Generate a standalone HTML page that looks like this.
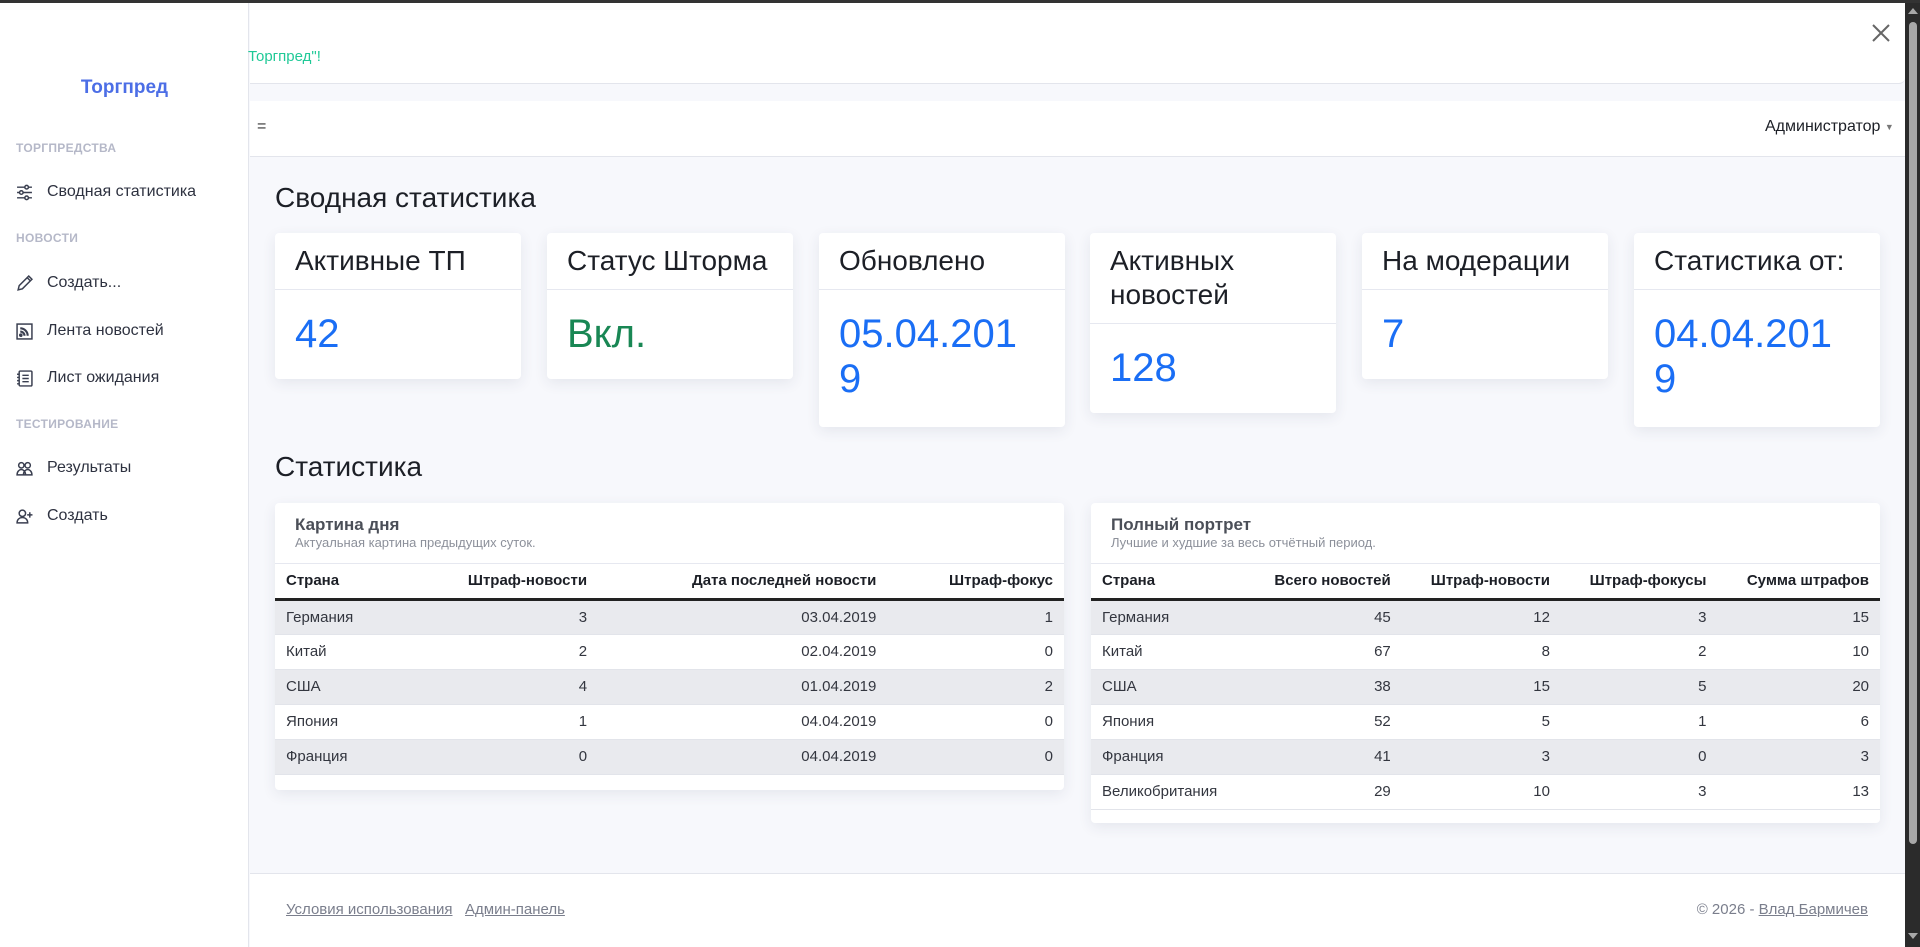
<!DOCTYPE html>
<html><head><meta charset="utf-8"><style>
*{box-sizing:border-box;margin:0;padding:0}
body{width:1920px;height:947px;overflow:hidden;background:#f7f8fc;font-family:"Liberation Sans",sans-serif;color:#212529;position:relative}
.a{position:absolute}
.side{left:0;top:3px;width:249px;height:944px;background:#fff;border-right:1px solid #e3e5ec}
.lbl{left:16px;font-size:12px;font-weight:bold;color:#b5b8c8;letter-spacing:.3px}
.it{left:16px;font-size:16px;color:#2e3240;display:flex;align-items:center;gap:14px;height:20px}
.it svg{width:17px;height:17px;stroke:#3a3f50;fill:none;stroke-width:1.4}
.card{background:#fff;border-radius:4px;box-shadow:0 4px 14px rgba(40,50,90,.09)}
.card .h{font-size:28px;padding:0 20px;border-bottom:1px solid #e6e8f0;color:#1c1f26;line-height:34px}
.card .v{font-size:40px;color:#1a6ef5;padding:0 20px;line-height:45px}
table{border-collapse:collapse;width:100%;font-size:15px}
th{font-weight:bold;text-align:right;height:35px;padding:0 11px;border-bottom:3px solid #222;color:#1c1f26}
td{text-align:right;height:35px;padding:0 11px;color:#33363f;border-top:1px solid #e2e4ea}
th:first-child,td:first-child{text-align:left}
tbody tr:nth-child(odd){background:#e9eaee}
.tt{font-size:17px;font-weight:bold;color:#4b4f58}
.ts{font-size:13px;color:#8c909a}
</style></head><body>
<div class="a" style="left:0;top:0;width:1920px;height:3px;background:#333"></div>
<div class="a side">
<div class="a" style="left:0;width:249px;top:74px;text-align:center;font-size:19px;font-weight:bold;color:#4c6ee6">Торгпред</div>
<div class="a lbl" style="top:138px">ТОРГПРЕДСТВА</div>
<div class="a it" style="top:179px"><svg viewBox="0 0 16 16"><path d="M1 3h14M1 8h14M1 13h14"/><circle cx="10" cy="3" r="1.7" fill="#fff"/><circle cx="5" cy="8" r="1.7" fill="#fff"/><circle cx="10" cy="13" r="1.7" fill="#fff"/></svg>Сводная статистика</div>
<div class="a lbl" style="top:228px">НОВОСТИ</div>
<div class="a it" style="top:270px"><svg viewBox="0 0 16 16"><path d="M2 14l1-4L12 1l3 3-9 9z M10.5 2.5l3 3"/></svg>Создать...</div>
<div class="a it" style="top:318px"><svg viewBox="0 0 16 16"><rect x="1" y="1" width="14" height="14"/><path d="M4 5a7 7 0 017 7M4 8a4 4 0 014 4" stroke-width="2"/><circle cx="4.5" cy="11.5" r="1" fill="#3a3f50"/></svg>Лента новостей</div>
<div class="a it" style="top:365px"><svg viewBox="0 0 16 16"><rect x="3" y="1" width="12" height="14" rx="1"/><path d="M6 5h6M6 8h6M6 11h6M1 4h2M1 7h2M1 10h2M1 13h2"/></svg>Лист ожидания</div>
<div class="a lbl" style="top:414px">ТЕСТИРОВАНИЕ</div>
<div class="a it" style="top:455px"><svg viewBox="0 0 16 16"><circle cx="5" cy="5" r="2.5"/><circle cx="11" cy="5" r="2.5"/><path d="M1 14c0-3 2-5 4-5s4 2 4 5zM7 14c0-3 2-5 4-5s4 2 4 5z"/></svg>Результаты</div>
<div class="a it" style="top:503px"><svg viewBox="0 0 16 16"><circle cx="6" cy="5" r="3"/><path d="M1 14c0-3 2-5 5-5s5 2 5 5zM13 4v5M10.5 6.5h5"/></svg>Создать</div>
</div>
<div class="a" style="left:250px;top:3px;width:1655px;height:81px;background:#fff;border-bottom:1px solid #e3e5ec;border-radius:0 0 6px 0"></div>
<div class="a" style="left:248px;top:48px;font-size:15px;color:#20c997">Торгпред"!</div>
<div class="a" style="left:1870px;top:22px;width:22px;height:22px"><svg width="22" height="22" viewBox="0 0 22 22"><path d="M3 3l16 16M19 3L3 19" stroke="#666" stroke-width="2"/></svg></div>
<div class="a" style="left:250px;top:101px;width:1655px;height:56px;background:#fff;border-bottom:1px solid #e3e5ec"></div>
<div class="a" style="left:257px;top:118px;font-size:16px;color:#333">=</div>
<div class="a" style="left:1765px;top:118px;font-size:16px;color:#1c1f26">Администратор <span style="font-size:9px;color:#777;vertical-align:middle">▼</span></div>
<div class="a" style="left:275px;top:182px;font-size:28px;color:#1c1f26">Сводная статистика</div>

<div class="a card" style="left:275px;top:233px;width:246px;height:146px"><div class="h" style="height:57px;padding-top:11px">Активные ТП</div><div class="v" style="padding-top:22px">42</div></div>
<div class="a card" style="left:547px;top:233px;width:246px;height:146px"><div class="h" style="height:57px;padding-top:11px">Статус Шторма</div><div class="v" style="padding-top:22px;color:#198754">Вкл.</div></div>
<div class="a card" style="left:819px;top:233px;width:246px;height:194px"><div class="h" style="height:57px;padding-top:11px">Обновлено</div><div class="v" style="padding-top:22px">05.04.201<br>9</div></div>
<div class="a card" style="left:1090px;top:233px;width:246px;height:180px"><div class="h" style="height:91px;padding-top:11px">Активных новостей</div><div class="v" style="padding-top:22px">128</div></div>
<div class="a card" style="left:1362px;top:233px;width:246px;height:146px"><div class="h" style="height:57px;padding-top:11px">На модерации</div><div class="v" style="padding-top:22px">7</div></div>
<div class="a card" style="left:1634px;top:233px;width:246px;height:194px"><div class="h" style="height:57px;padding-top:11px">Статистика от:</div><div class="v" style="padding-top:22px">04.04.201<br>9</div></div>

<div class="a" style="left:275px;top:451px;font-size:28px;color:#1c1f26">Статистика</div>

<div class="a card" style="left:275px;top:503px;width:789px;height:287px">
<div style="height:61px;border-bottom:1px solid #e6e8f0;padding:12px 20px 0"><div class="tt">Картина дня</div><div class="ts">Актуальная картина предыдущих суток.</div></div>
<table><thead><tr><th>Страна</th><th>Штраф-новости</th><th>Дата последней новости</th><th>Штраф-фокус</th></tr></thead>
<tbody><tr><td>Германия</td><td>3</td><td>03.04.2019</td><td>1</td></tr>
<tr><td>Китай</td><td>2</td><td>02.04.2019</td><td>0</td></tr>
<tr><td>США</td><td>4</td><td>01.04.2019</td><td>2</td></tr>
<tr><td>Япония</td><td>1</td><td>04.04.2019</td><td>0</td></tr>
<tr><td>Франция</td><td>0</td><td>04.04.2019</td><td>0</td></tr></tbody></table>
<div style="border-top:1px solid #e2e4ea"></div></div>

<div class="a card" style="left:1091px;top:503px;width:789px;height:320px">
<div style="height:61px;border-bottom:1px solid #e6e8f0;padding:12px 20px 0"><div class="tt">Полный портрет</div><div class="ts">Лучшие и худшие за весь отчётный период.</div></div>
<table><thead><tr><th>Страна</th><th>Всего новостей</th><th>Штраф-новости</th><th>Штраф-фокусы</th><th>Сумма штрафов</th></tr></thead>
<tbody><tr><td>Германия</td><td>45</td><td>12</td><td>3</td><td>15</td></tr>
<tr><td>Китай</td><td>67</td><td>8</td><td>2</td><td>10</td></tr>
<tr><td>США</td><td>38</td><td>15</td><td>5</td><td>20</td></tr>
<tr><td>Япония</td><td>52</td><td>5</td><td>1</td><td>6</td></tr>
<tr><td>Франция</td><td>41</td><td>3</td><td>0</td><td>3</td></tr>
<tr><td>Великобритания</td><td>29</td><td>10</td><td>3</td><td>13</td></tr></tbody></table>
<div style="border-top:1px solid #e2e4ea"></div></div>

<div class="a" style="left:250px;top:873px;width:1655px;height:74px;background:#fff;border-top:1px solid #e3e5ec"></div>
<div class="a" style="left:286px;top:901px;font-size:15px;color:#7a7e8c"><span style="text-decoration:underline">Условия использования</span>&nbsp;&nbsp; <span style="text-decoration:underline">Админ-панель</span></div>
<div class="a" style="right:52px;top:901px;font-size:15px;color:#7a7e8c">© 2026 - <span style="text-decoration:underline">Влад Бармичев</span></div>

<div class="a" style="left:1905px;top:3px;width:15px;height:944px;background:#2b2b2b"></div>
<div class="a" style="left:1909px;top:22px;width:8px;height:822px;background:#a8a8a8;border-radius:4px"></div>
<div class="a" style="left:1908px;top:8px;width:0;height:0;border-left:5px solid transparent;border-right:5px solid transparent;border-bottom:6px solid #a8a8a8"></div>
<div class="a" style="left:1908px;top:933px;width:0;height:0;border-left:5px solid transparent;border-right:5px solid transparent;border-top:6px solid #a8a8a8"></div>
</body></html>
